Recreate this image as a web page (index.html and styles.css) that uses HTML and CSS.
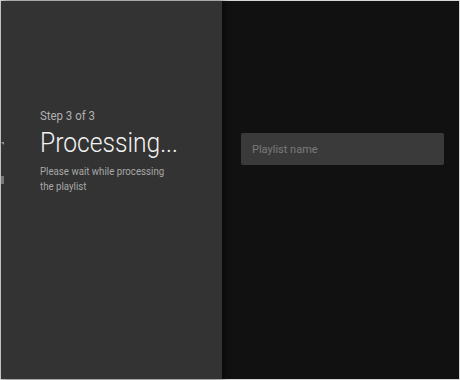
FILE: index.html
```html
<!DOCTYPE html>
<html lang="en">
<head>
    <meta charset="UTF-8">
    <meta name="viewport" content="width=device-width, initial-scale=1.0">
    <title>Add Playlist</title>
    <link rel="stylesheet" href="styles.css">
</head>
<body>
    <div class="screen">
        <div class="guidance">
            <span class="edge-arrow"></span>
            <span class="edge-tab"></span>
            <div class="guidance-text">
                <div class="breadcrumb">Step 3 of 3</div>
                <h1 class="title">Processing...</h1>
                <p class="description">Please wait while processing<br>the playlist</p>
            </div>
        </div>
        <div class="actions">
            <input type="text" class="name-input" placeholder="Playlist name">
        </div>
    </div>
</body>
</html>
```

FILE: styles.css
```css
html, body {
    margin: 0;
    padding: 0;
}
body {
    width: 460px;
    height: 380px;
    font-family: Roboto, "Noto Sans", sans-serif;
    background-color: #111;
}
.screen {
    display: flex;
    height: 380px;
    box-sizing: border-box;
    border: 1px solid #d8d8d8;
}
.guidance {
    position: relative;
    width: 221px;
    flex-shrink: 0;
    box-sizing: border-box;
    padding: 107px 0 0 39px;
    background-color: #333;
    box-shadow: 2px 0 6px rgba(0, 0, 0, 0.5);
    z-index: 1;
}
.guidance-text {
    transform: scaleX(0.88);
    transform-origin: left top;
}
.breadcrumb {
    font-size: 13px;
    color: #b0b0b0;
    line-height: 16px;
}
.title {
    margin: 2px 0 0;
    font-size: 28px;
    font-weight: 300;
    color: #f2f2f2;
    line-height: 34px;
}
.description {
    margin: 4px 0 0;
    font-size: 11px;
    color: #a8a8a8;
    line-height: 15px;
    width: 240px;
}
.edge-arrow {
    position: absolute;
    left: 0;
    top: 141px;
    width: 0;
    height: 0;
    border-top: 3px solid #999;
    border-left: 3px solid transparent;
}
.edge-tab {
    position: absolute;
    left: 0;
    top: 175px;
    width: 3px;
    height: 8px;
    background-color: #777;
}
.actions {
    flex: 1;
    padding: 132px 15px 0 19px;
}
.name-input {
    display: block;
    width: 100%;
    height: 32px;
    box-sizing: border-box;
    padding: 0 11px;
    border: none;
    border-radius: 2px;
    background-color: #3a3a3a;
    font-family: Roboto, "Noto Sans", sans-serif;
    font-size: 11px;
    color: #ddd;
    outline: none;
}
.name-input::placeholder {
    color: #7a7a7a;
}
```
